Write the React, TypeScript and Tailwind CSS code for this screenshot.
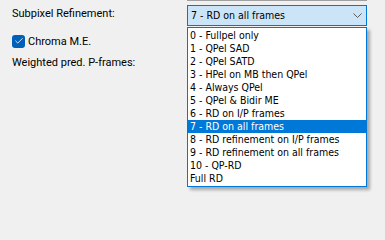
import { Check } from "lucide-react";

const options = [
  "0 - Fullpel only",
  "1 - QPel SAD",
  "2 - QPel SATD",
  "3 - HPel on MB then QPel",
  "4 - Always QPel",
  "5 - QPel & Bidir ME",
  "6 - RD on I/P frames",
  "7 - RD on all frames",
  "8 - RD refinement on I/P frames",
  "9 - RD refinement on all frames",
  "10 - QP-RD",
  "Full RD",
];

const selected = 7;

export default function App() {
  return (
    <div className="w-full h-screen min-h-[202px] bg-[#f0f0f0] flex overflow-hidden text-black">
      {/* Labels */}
      <div className="w-[187px] shrink-0 pl-3 pt-[5px] flex flex-col font-['Roboto',sans-serif] text-[11px] leading-none">
        <div className="h-4 flex items-center">Subpixel Refinement:</div>
        <div className="mt-[12px] h-4 flex items-center gap-[3px]">
          <span className="w-[13px] h-[13px] rounded-[3px] bg-[#005fb8] flex items-center justify-center">
            <Check size={10} strokeWidth={2} className="text-white" />
          </span>
          Chroma M.E.
        </div>
        <div className="mt-[5px] h-4 flex items-center">Weighted pred. P-frames:</div>
      </div>

      {/* Combo + open list */}
      <div className="w-[180px] shrink-0 flex flex-col font-['DejaVu_Sans_Condensed','DejaVu_Sans',sans-serif] text-[10.5px]">
        <div className="h-px bg-[#a0a0a0]" />
        <div className="mt-1 h-[21px] border border-[#0078d7] bg-[#cce4f7] flex items-center justify-between pl-[3px] pr-[4px]">
          <span>{options[selected]}</span>
          <svg width="9" height="5" viewBox="0 0 9 5" className="text-[#5a5a5a]">
            <path d="M0.5 0.5 L4.5 4.5 L8.5 0.5" fill="none" stroke="currentColor" strokeWidth="1" />
          </svg>
        </div>
        <div className="mt-px border border-[#0078d7] bg-white py-px shadow-[3px_3px_3px_rgba(0,0,0,0.3)]">
          {options.map((o, i) => (
            <div
              key={o}
              className={`h-[13px] leading-[13px] pl-[2px] whitespace-nowrap ${
                i === selected ? "bg-[#0078d7] text-white" : ""
              }`}
            >
              {o}
            </div>
          ))}
        </div>
      </div>
    </div>
  );
}
